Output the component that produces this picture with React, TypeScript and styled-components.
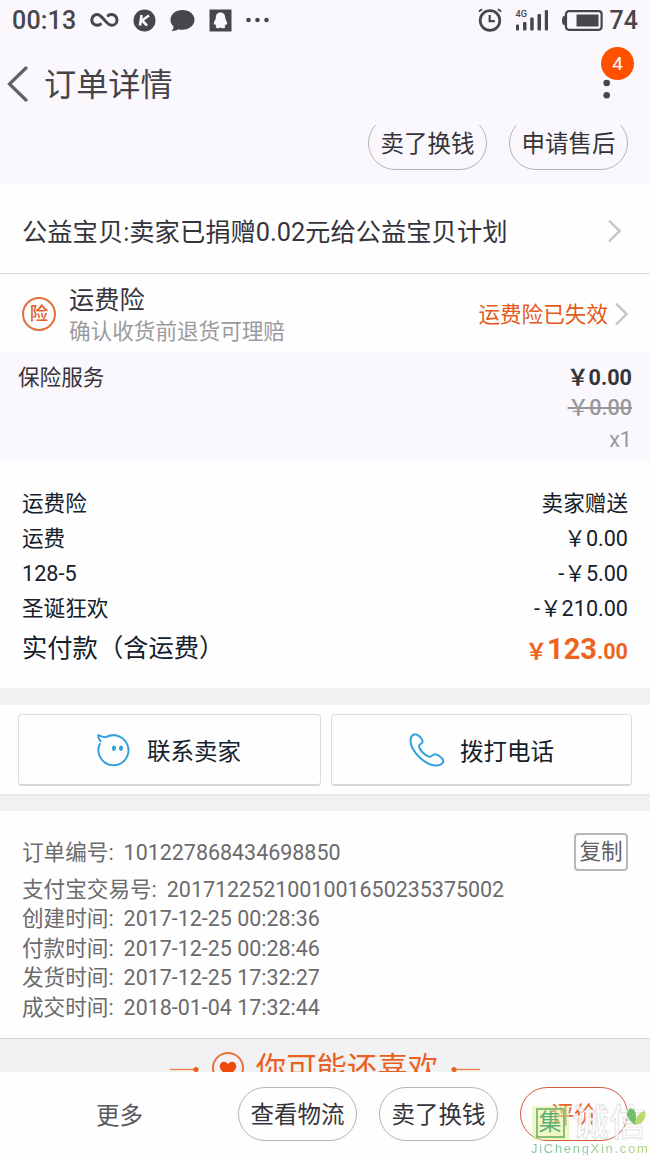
import React from "react";
import styled, { createGlobalStyle } from "styled-components";

const GlobalStyle = createGlobalStyle`
  * { box-sizing: border-box; }
  body { margin: 0; background: #fefefe; }
`;

const Screen = styled.div`
  position: relative;
  width: 650px;
  height: 1155px;
  overflow: hidden;
  display: flex;
  flex-direction: column;
  background: #fefefe;
  color: #35343a;
  font-family: Roboto, "Noto Sans CJK SC", sans-serif;
  font-size: 21.6px;
  white-space: nowrap;
`;

const StatusBar = styled.header`
  height: 40px;
  flex: none;
  display: flex;
  align-items: center;
  justify-content: space-between;
  padding: 0 12px 0 12px;
  background: #faf8fc;
  color: #48464b;
  font-size: 25px;
  font-weight: 500;
`;

const StatusGroup = styled.div<{ $gap: number }>`
  display: flex;
  align-items: center;
  gap: ${(p) => p.$gap}px;
`;

const Clock = styled.span`
  letter-spacing: 0.2px;
`;

const TitleBar = styled.div`
  height: 85px;
  flex: none;
  display: flex;
  align-items: flex-start;
  justify-content: space-between;
  padding: 6px 16px 0 7px;
  background: #faf8fc;
`;

const TitleGroup = styled.div`
  display: flex;
  align-items: center;
  gap: 16px;
  height: 75px;
`;

const Title = styled.h1`
  margin: 0;
  padding-top: 2px;
  font-size: 32.2px;
  font-weight: 400;
  line-height: 40px;
  color: #454349;
`;

const MenuButton = styled.div`
  position: relative;
  width: 33px;
  height: 60px;
`;

const MenuDots = styled.svg`
  position: absolute;
  left: 1px;
  top: 32px;
`;

const Badge = styled.span`
  position: absolute;
  left: 0;
  top: 1px;
  width: 33px;
  height: 33px;
  border-radius: 50%;
  background: #ff5000;
  color: #fff;
  font-size: 19px;
  line-height: 33px;
  text-align: center;
`;

const ClippedActions = styled.div`
  height: 59px;
  flex: none;
  display: flex;
  align-items: flex-end;
  justify-content: flex-end;
  gap: 22px;
  padding: 0 22px 14px 0;
  overflow: hidden;
  background: #faf8fc;
`;

const Pill = styled.button<{ $accent?: boolean; $width?: number }>`
  flex: none;
  width: ${(p) => p.$width ?? 119}px;
  height: 54px;
  padding: 2px 0 0;
  border: 1px solid ${(p) => (p.$accent ? "#cf5b3c" : "#b5b4b8")};
  border-radius: 27px;
  background: transparent;
  color: ${(p) => (p.$accent ? "#e2632f" : "#35343a")};
  font: inherit;
  font-size: 23.5px;
  line-height: 50px;
  white-space: nowrap;
`;

const LinkRow = styled.div`
  height: 90px;
  flex: none;
  display: flex;
  align-items: center;
  justify-content: space-between;
  padding: 4px 28px 0 22px;
  border-bottom: 1px solid #d8d7da;
  font-size: 25.3px;
`;

const LinkLabel = styled.span`
  line-height: 32px;
  padding-top: 4px;
`;

const InsuranceRow = styled.div`
  height: 78px;
  flex: none;
  display: flex;
  align-items: center;
  padding: 2px 21px 0 22px;
`;

const InsuranceSeal = styled.span`
  width: 34px;
  height: 34px;
  margin-right: 13px;
  border: 2px solid #e2703c;
  border-radius: 50%;
  color: #e2602a;
  font-size: 18.5px;
  font-weight: 500;
  line-height: 30px;
  text-align: center;
`;

const InsuranceText = styled.div`
  flex: 1;
  display: flex;
  flex-direction: column;
  padding-top: 4px;
`;

const InsuranceName = styled.span`
  font-size: 25.2px;
  line-height: 32px;
`;

const InsuranceHint = styled.span`
  line-height: 30px;
  color: #9b9a9e;
`;

const InsuranceState = styled.span`
  margin: 0 6px 3px 0;
  color: #e35a1c;
`;

const ServiceBlock = styled.section`
  height: 109px;
  flex: none;
  display: flex;
  justify-content: space-between;
  padding: 11px 18px 0;
  background: #faf8fc;
  line-height: 30px;
`;

const ServicePrices = styled.div`
  display: flex;
  flex-direction: column;
  align-items: flex-end;
`;

const Price = styled.span`
  font-weight: 700;
`;

const OldPrice = styled.span`
  font-weight: 500;
  color: #98979b;
  text-decoration: line-through;
`;

const Quantity = styled.span`
  line-height: 34px;
  color: #98979b;
`;

const Summary = styled.section`
  height: 227px;
  flex: none;
  padding: 25px 22px 0;
  color: #14202a;
`;

const SummaryLine = styled.div<{ $total?: boolean }>`
  display: flex;
  justify-content: space-between;
  line-height: ${(p) => (p.$total ? 46 : 35)}px;
  font-size: ${(p) => (p.$total ? 25.3 : 21.6)}px;
`;

const Total = styled.span`
  color: #ed6420;
  font-size: 21.6px;
  font-weight: 700;
`;

const TotalWhole = styled.span`
  font-size: 29px;
`;

const Divider = styled.div<{ $ruled?: boolean }>`
  height: 17px;
  flex: none;
  background: #f2f1f4;
  border-top: ${(p) => (p.$ruled ? "2px solid #e9e8eb" : "none")};
`;

const ContactBar = styled.section`
  height: 89px;
  flex: none;
  display: flex;
  gap: 10px;
  padding: 9px 18px 8px;
`;

const ContactButton = styled.button<{ $inset?: number }>`
  flex: 1;
  display: flex;
  align-items: center;
  justify-content: center;
  gap: 15px;
  padding: 0 ${(p) => p.$inset ?? 0}px 0 0;
  border: 1px solid #dddce0;
  border-bottom: 2px solid #d6d5d8;
  border-radius: 4px;
  background: #fefefe;
  color: #14202a;
  font: inherit;
  font-size: 23.5px;
`;

const OrderInfo = styled.section`
  height: 228px;
  flex: none;
  padding: 22px 22px 0;
  border-bottom: 1px solid #d5d4d8;
  color: #6b6a6d;
`;

const OrderNumberRow = styled.div`
  display: flex;
  align-items: flex-start;
  justify-content: space-between;
  height: 37px;
  padding-top: 0;
  margin-bottom: 4.5px;
`;

const InfoLine = styled.div<{ $tall?: boolean }>`
  display: flex;
  gap: 10px;
  line-height: ${(p) => (p.$tall ? 40 : 29.5)}px;
`;

const InfoValue = styled.span`
  font-size: 21.45px;
`;

const CopyButton = styled.button`
  width: 54px;
  height: 38px;
  padding: 0;
  border: 2px solid #b8b7ba;
  border-radius: 4px;
  background: transparent;
  color: #5f5e62;
  font: inherit;
  line-height: 34px;
`;

const Recommend = styled.section`
  height: 33px;
  flex: none;
  display: flex;
  justify-content: center;
  padding-top: 7px;
  overflow: hidden;
  background: #f2f1f4;
  color: #e9611e;
  font-size: 30.4px;
  line-height: 46px;
`;

const RecommendMark = styled.svg`
  flex: none;
`;

const RecommendTitle = styled.span`
  margin: 0 13px 0 11px;
`;

const ActionBar = styled.footer`
  height: 83px;
  flex: none;
  display: flex;
  align-items: center;
  gap: 22px;
  padding: 0 22px 0 96px;
  background: #fefefe;
`;

const More = styled.span`
  flex: 1;
  color: #58575b;
  font-size: 23.5px;
`;

const Watermark = styled.div`
  position: absolute;
  left: 530px;
  top: 1106px;
  width: 120px;
  height: 49px;
`;

const WatermarkSeal = styled.span`
  position: absolute;
  left: 2px;
  top: 0;
  width: 37px;
  height: 34px;
  padding: 2px 4px;
  background: rgba(226, 240, 140, 0.5);
`;

const SealGlyph = styled.span`
  display: block;
  width: 29px;
  height: 30px;
  border: 2px solid #86bd7b;
  color: #5faf78;
  font-size: 23px;
  line-height: 26px;
  text-align: center;
  text-indent: -1px;
`;

const WatermarkName = styled.span`
  position: absolute;
  left: 42px;
  top: -2px;
  color: rgba(255, 255, 255, 0.75);
  font-size: 37px;
  font-weight: 500;
  line-height: 40px;
  -webkit-text-stroke: 0.7px #d8d8da;
`;

const WatermarkUrl = styled.span`
  position: absolute;
  left: 1px;
  top: 36px;
  font-family: "Liberation Sans", sans-serif;
  font-size: 13px;
  line-height: 14px;
  letter-spacing: 1.7px;
  background: linear-gradient(90deg, #7cc0a4, #b4d67c);
  background-clip: text;
  -webkit-background-clip: text;
  color: transparent;
`;

const Leaf = styled.svg`
  position: absolute;
  left: 97px;
  top: 1px;
`;

const Chevron = () => (
  <svg width="15" height="24" viewBox="0 0 15 24" fill="none" stroke="#c4c3c7" strokeWidth="2.4">
    <path d="M2 1.5 12.5 12 2 22.5" />
  </svg>
);

const charges = [
  ["运费险", "卖家赠送"],
  ["运费", "￥0.00"],
  ["128-5", "-￥5.00"],
  ["圣诞狂欢", "-￥210.00"],
];

const records = [
  ["支付宝交易号:", "2017122521001001650235375002"],
  ["创建时间:", "2017-12-25 00:28:36"],
  ["付款时间:", "2017-12-25 00:28:46"],
  ["发货时间:", "2017-12-25 17:32:27"],
  ["成交时间:", "2018-01-04 17:32:44"],
];

export default function App() {
  return (
    <Screen>
      <GlobalStyle />
      <StatusBar>
        <StatusGroup $gap={14}>
          <Clock>00:13</Clock>
          <svg width="29" height="16" viewBox="0 0 29 16" fill="none" stroke="#48464b" strokeWidth="3" strokeLinecap="round">
            <path d="M10.5 12.2C9.4 13 8.400 13.300 7.200 13.300 4.200 13.300 1.800 10.900 1.800 7.900 1.800 4.900 4.200 2.500 7.200 2.500 12.400 2.500 16.300 13.300 21.600 13.300 24.600 13.300 27 10.900 27 7.900 27 4.900 24.600 2.500 21.600 2.500 20.300 2.500 19.200 2.900 18.200 3.600" />
          </svg>
          <svg width="23" height="23" viewBox="0 0 23 23">
            <circle cx="11.500" cy="11.500" r="11" fill="#48464b" />
            <path d="M8.600 6 7 16.500M16 6.500 9 11.500 14 16.500" fill="none" stroke="#f9f8fc" strokeWidth="2.600" />
          </svg>
          <svg width="25" height="23" viewBox="0 0 25 23">
            <path d="M12.500 1C19.200 1 24.500 5.200 24.500 10.800 24.500 16.400 19.200 20.800 12.500 20.800 11 20.800 9.500 20.600 8.200 20.200 6.500 21.400 4.200 22 1.500 21.700 3 20.600 3.700 19.300 3.500 17.600 1.500 15.800.5 13.400.5 10.800.5 5.200 5.800 1 12.500 1Z" fill="#48464b" />
          </svg>
          <svg width="23" height="23" viewBox="0 0 23 23">
            <rect x=".5" y=".5" width="22" height="22" fill="#48464b" />
            <path d="M11.500 3.600C8.200 3.600 6.800 6 6.800 8.800 6.800 10.700 4.800 12.500 4.800 14.800 4.800 16.300 5.400 16 6.200 15.100 6.400 16.200 6.900 17 7.500 17.600 6.200 18.300 6.400 19.200 8.600 19.200 10 19.200 11 18.900 11.500 18.400 12 18.900 13 19.200 14.400 19.200 16.600 19.200 16.800 18.300 15.500 17.600 16.100 17 16.600 16.200 16.800 15.100 17.600 16 18.200 16.300 18.200 14.800 18.200 12.500 16.200 10.700 16.200 8.800 16.200 6 14.800 3.600 11.500 3.600Z" fill="#f9f8fc" />
          </svg>
          <svg width="24" height="6" viewBox="0 0 24 6" fill="#48464b">
            <circle cx="2.500" cy="3" r="2.300" />
            <circle cx="11.500" cy="3" r="2.300" />
            <circle cx="20.500" cy="3" r="2.300" />
          </svg>
        </StatusGroup>
        <StatusGroup $gap={13}>
          <svg width="24" height="24" viewBox="0 0 24 24" fill="none" stroke="#48464b">
            <circle cx="12" cy="12.500" r="9.800" strokeWidth="2.700" />
            <path d="M11.700 7V13.200H16.800" strokeWidth="2.200" />
            <path d="M1 3.800Q2.200 2 4.200 1.300M19.800 1.300Q21.800 2 23 3.800" strokeWidth="1.800" />
          </svg>
          <svg width="34" height="24" viewBox="0 0 34 24" fill="#48464b">
            <text x="0.500" y="9" fontSize="9.500" fontWeight="500" textLength="11.500" lengthAdjust="spacingAndGlyphs">4G</text>
            <rect x="1" y="16.500" width="3" height="6" rx="1" />
            <rect x="8" y="14" width="3.500" height="8.500" rx="1" />
            <rect x="15.200" y="9.500" width="3.500" height="13" rx="1" />
            <rect x="22.500" y="6" width="3.500" height="16.500" rx="1" />
            <rect x="29.800" y="2" width="3.200" height="20.500" rx="1" />
          </svg>
          <StatusGroup $gap={7}>
            <svg width="41" height="21" viewBox="0 0 41 21" fill="#48464b">
              <rect x="4" y="1.200" width="35.600" height="18.600" rx="3" fill="none" stroke="#48464b" strokeWidth="2.200" />
              <path d="M3 5.500Q0 6 0 10.500 0 15 3 15.500Z" />
              <rect x="14.500" y="4.500" width="22" height="12" />
            </svg>
            <span>74</span>
          </StatusGroup>
        </StatusGroup>
      </StatusBar>

      <TitleBar>
        <TitleGroup>
          <svg width="21" height="36" viewBox="0 0 21 36" fill="none" stroke="#5f6068" strokeWidth="3.200" strokeLinecap="round">
            <path d="M19 2 2.500 18 19 34" />
          </svg>
          <Title>订单详情</Title>
        </TitleGroup>
        <MenuButton>
          <MenuDots width="10" height="22" viewBox="0 0 10 22" fill="#48464b">
            <circle cx="4.700" cy="5" r="3.300" />
            <circle cx="4.700" cy="17.300" r="3.300" />
          </MenuDots>
          <Badge>4</Badge>
        </MenuButton>
      </TitleBar>

      <ClippedActions>
        <Pill>卖了换钱</Pill>
        <Pill>申请售后</Pill>
      </ClippedActions>

      <LinkRow>
        <LinkLabel>公益宝贝:卖家已捐赠0.02元给公益宝贝计划</LinkLabel>
        <Chevron />
      </LinkRow>

      <InsuranceRow>
        <InsuranceSeal>险</InsuranceSeal>
        <InsuranceText>
          <InsuranceName>运费险</InsuranceName>
          <InsuranceHint>确认收货前退货可理赔</InsuranceHint>
        </InsuranceText>
        <InsuranceState>运费险已失效</InsuranceState>
        <Chevron />
      </InsuranceRow>

      <ServiceBlock>
        <span>保险服务</span>
        <ServicePrices>
          <Price>￥0.00</Price>
          <OldPrice>￥0.00</OldPrice>
          <Quantity>x1</Quantity>
        </ServicePrices>
      </ServiceBlock>

      <Summary>
        {charges.map(([label, amount]) => (
          <SummaryLine key={label}>
            <span>{label}</span>
            <span>{amount}</span>
          </SummaryLine>
        ))}
        <SummaryLine $total>
          <span>实付款（含运费）</span>
          <Total>
            ￥<TotalWhole>123</TotalWhole>.00
          </Total>
        </SummaryLine>
      </Summary>

      <Divider />
      <ContactBar>
        <ContactButton $inset={2}>
          <svg width="36" height="34" viewBox="0 0 36 34" fill="none" stroke="#35a0dc" strokeWidth="2" strokeLinejoin="round" strokeLinecap="round">
            <path d="M3.800 11A15 15 0 1 0 10 4.200Q6 4.200 2.300 2Q2 5.500 4.600 8.200" />
            <ellipse cx="18" cy="15.200" rx="1.900" ry="2.800" fill="#35a0dc" stroke="none" />
            <ellipse cx="25" cy="15.200" rx="1.900" ry="2.800" fill="#35a0dc" stroke="none" />
          </svg>
          联系卖家
        </ContactButton>
        <ContactButton>
          <svg width="36" height="34" viewBox="0 0 36 34" fill="none" stroke="#35a0dc" strokeWidth="2" strokeLinejoin="round">
            <path d="M5 1.500C8.500.2 13.800 5.800 13.600 9 13.400 11.200 9.600 10.800 10 13.500 10.600 17.500 16.500 22.800 20.200 23.800 22.800 24.400 23.800 20.900 26.500 21.300 29.500 21.800 34.600 25.400 34.300 28.300 34 31 30.500 32.600 27.500 32.600 16 32.600 1.500 18 1.500 7.500 1.500 5 2.700 2.500 5 1.500Z" />
          </svg>
          拨打电话
        </ContactButton>
      </ContactBar>
      <Divider $ruled />

      <OrderInfo>
        <OrderNumberRow>
          <InfoLine $tall>
            <span>订单编号:</span>
            <InfoValue>101227868434698850</InfoValue>
          </InfoLine>
          <CopyButton>复制</CopyButton>
        </OrderNumberRow>
        {records.map(([label, value]) => (
          <InfoLine key={label}>
            <span>{label}</span>
            <InfoValue>{value}</InfoValue>
          </InfoLine>
        ))}
      </OrderInfo>

      <Recommend>
        <RecommendMark width="76" height="46" viewBox="0 0 76 46">
          <path d="M1 23.500H27" stroke="#e9813f" strokeWidth="1.300" />
          <circle cx="27" cy="23.500" r="2.600" fill="#e9611e" />
          <circle cx="59" cy="22" r="15" fill="none" stroke="#e9713a" strokeWidth="2" />
          <path d="M59 31 52.500 24.500C48.500 20 52 15 56 16 57.500 16.300 58.500 17.300 59 18.300 59.500 17.300 60.500 16.300 62 16 66 15 69.500 20 65.500 24.500Z" fill="#ef4a0c" />
        </RecommendMark>
        <RecommendTitle>你可能还喜欢</RecommendTitle>
        <RecommendMark width="30" height="46" viewBox="0 0 30 46">
          <path d="M3 23.500H29" stroke="#e9813f" strokeWidth="1.300" />
          <circle cx="3" cy="23.500" r="2.600" fill="#e9611e" />
        </RecommendMark>
      </Recommend>

      <ActionBar>
        <More>更多</More>
        <Pill>查看物流</Pill>
        <Pill>卖了换钱</Pill>
        <Pill $accent $width={108}>评价</Pill>
      </ActionBar>

      <Watermark>
        <WatermarkSeal>
          <SealGlyph>集</SealGlyph>
        </WatermarkSeal>
        <WatermarkName>诚信</WatermarkName>
        <Leaf width="20" height="20" viewBox="0 0 20 20">
          <path d="M8 18C0 13-1 5 2 2 7 0 11 6 8 18Z" fill="#6fbf6b" />
          <path d="M8 18C8 11 12 5 18 4 20 10 16 17 8 18Z" fill="#b5d96b" />
        </Leaf>
        <WatermarkUrl>JiChengXin.com</WatermarkUrl>
      </Watermark>
    </Screen>
  );
}
